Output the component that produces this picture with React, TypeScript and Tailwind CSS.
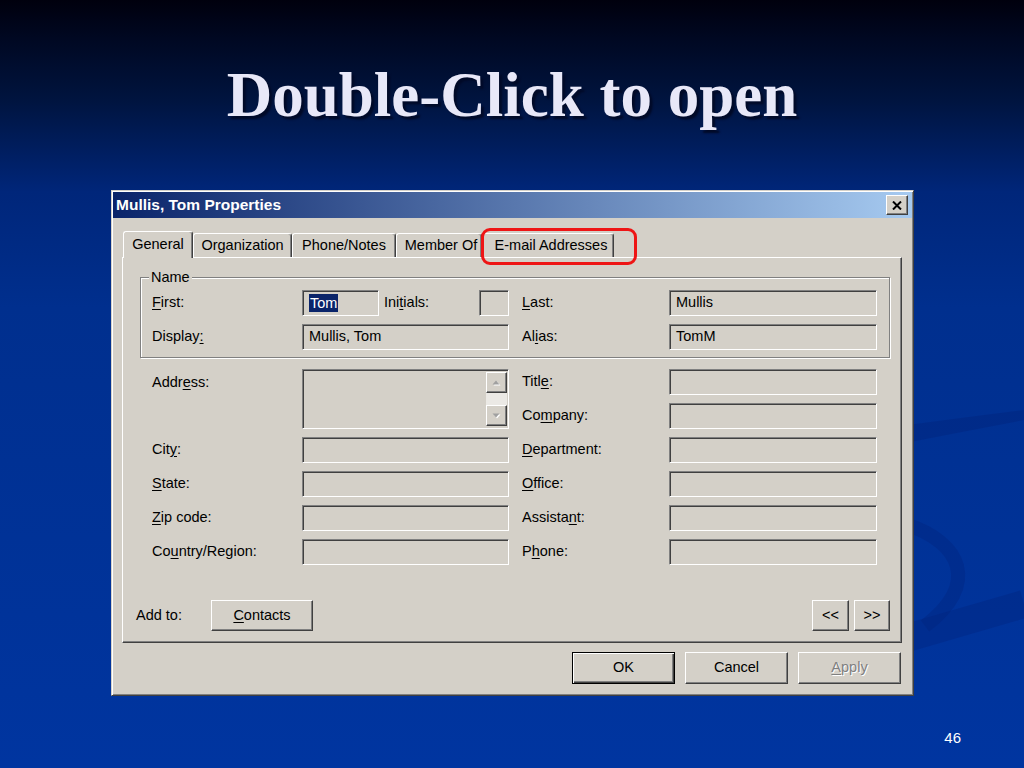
import React from "react";

const sunken =
  "bg-[#d4d0c8] border border-t-[#808080] border-l-[#808080] border-b-white border-r-white shadow-[inset_1px_1px_0_#404040,inset_-1px_-1px_0_#d4d0c8]";
const raised =
  "bg-[#d4d0c8] border border-t-white border-l-white border-r-[#404040] border-b-[#404040] shadow-[inset_-1px_-1px_0_#808080]";

// label with one underlined access key
function L({ t, k }: { t: string; k: number }) {
  return (
    <span className="whitespace-nowrap">
      {t.slice(0, k)}
      <span className="underline underline-offset-2">{t[k]}</span>
      {t.slice(k + 1)}
    </span>
  );
}

function Field({ value, className = "" }: { value?: React.ReactNode; className?: string }) {
  return (
    <div className={`${sunken} h-full flex items-center pl-[6px] ${className}`}>
      {value}
    </div>
  );
}

function Arrow({ up }: { up?: boolean }) {
  return (
    <div className={`${raised} h-[21px] flex items-center justify-center`}>
      <svg width="9" height="6" viewBox="0 0 9 6">
        <polygon points={up ? "1.5,5.5 8.5,5.5 5,1.5" : "1.5,1.5 8.5,1.5 5,5.5"} fill="#fff" />
        <polygon points={up ? "0.5,4.5 7.5,4.5 4,0.5" : "0.5,0.5 7.5,0.5 4,4.5"} fill="#a0a0a0" />
      </svg>
    </div>
  );
}

const tabs = [
  { label: "General", w: "w-[70px]", active: true },
  { label: "Organization", w: "w-[99px]" },
  { label: "Phone/Notes", w: "w-[104px]" },
  { label: "Member Of", w: "w-[86px]", pad: "pl-[4px]" },
  { label: "E-mail Addresses", w: "w-[132px]", pad: "pl-[6px]" },
];

export default function App() {
  return (
    <div className="relative w-[1024px] h-[768px] overflow-hidden bg-[linear-gradient(180deg,#00000d_0%,#000822_5%,#00143f_13%,#00267a_25%,#002f8e_40%,#0035a0_100%)]">
      {/* faint swoosh of the slide template */}
      <svg className="absolute inset-0" width="1024" height="768" viewBox="0 0 1024 768">
        <path d="M 900 426 Q 960 418 1024 410 L 1024 420 Q 960 432 900 444 Z" fill="#00227a" opacity="0.4" />
        <path d="M 905 524 C 962 542 980 585 925 626" stroke="#00227a" strokeWidth="14" fill="none" opacity="0.35" />
        <path d="M 900 640 L 1024 604" stroke="#00227a" strokeWidth="28" fill="none" opacity="0.35" />
      </svg>

      <div className="relative flex flex-col">
        <h1 className="h-[190px] pt-[64px] text-center text-[63px] leading-[63px] font-bold font-['Liberation_Serif','Times_New_Roman',serif] text-[#e8e8f8] [text-shadow:3px_3px_2px_#000a28]">
          Double-Click to open
        </h1>

        {/* dialog */}
        <div className="ml-[111px] w-[803px] h-[506px] p-[1px] flex flex-col bg-[#d4d0c8] border border-t-[#d4d0c8] border-l-[#d4d0c8] border-r-[#404040] border-b-[#404040] shadow-[inset_1px_1px_0_#fff,inset_-1px_-1px_0_#808080] font-['Liberation_Sans',Arial,sans-serif] text-[14.5px] text-black">
          <div className="h-[26px] flex items-center pl-[3px] pr-[4px] bg-[linear-gradient(90deg,#0a246a,#a6caf0)]">
            <span className="flex-1 text-white font-bold text-[15.5px]">Mullis, Tom Properties</span>
            <div className={`${raised} w-[22px] h-[20px] flex items-center justify-center`}>
              <svg width="10" height="9" viewBox="0 0 10 9">
                <path d="M1 0.5 L9 8.5 M9 0.5 L1 8.5" stroke="#000" strokeWidth="2" />
              </svg>
            </div>
          </div>

          <div className="relative flex-1 flex flex-col pl-[9px] pr-[10px] pt-[13px]">
            {/* tabs */}
            <div className="flex items-end h-[26px]">
              {tabs.map((t) =>
                t.active ? (
                  <div
                    key={t.label}
                    className={`${t.w} relative z-10 ml-[1px] -mb-[1px] h-[27px] flex items-start pt-[2px] justify-center bg-[#d4d0c8] border-t border-l border-r border-t-white border-l-white border-r-[#404040] shadow-[inset_-1px_0_0_#808080] rounded-t-[3px]`}
                  >
                    {t.label}
                  </div>
                ) : (
                  <div
                    key={t.label}
                    className={`${t.w} ${t.pad ?? ""} h-[24px] flex items-center justify-center border-t border-l border-r border-t-white border-l-white border-r-[#404040] shadow-[inset_-1px_0_0_#808080] rounded-t-[3px]`}
                  >
                    {t.label}
                  </div>
                )
              )}
            </div>

            {/* red highlight */}
            <div className="absolute left-[368px] top-[10px] w-[156px] h-[37px] rounded-[9px] border-[3px] border-[#ee1515]" />

            {/* tab panel */}
            <div className="w-[780px] h-[386px] flex flex-col border border-t-white border-l-white border-r-[#404040] border-b-[#404040] shadow-[inset_-1px_-1px_0_#808080]">
              {/* Name group */}
              <div className="relative ml-[17px] mr-[11px] mt-[19px] h-[81px] border border-[#808080] shadow-[inset_1px_1px_0_#fff,1px_1px_0_#fff]">
                <span className="absolute left-[8px] -top-[10px] px-[2px] leading-[18px] bg-[#d4d0c8]">Name</span>
                <div className="pl-[11px] pt-[12px] flex flex-col gap-[8px]">
                  <div className="flex items-center h-[26px]">
                    <span className="w-[150px]"><L t="First:" k={0} /></span>
                    <Field
                      className="w-[77px]"
                      value={<span className="bg-[#0a246a] text-white px-[1px] leading-[18px]">Tom</span>}
                    />
                    <span className="ml-[5px] w-[95px]"><L t="Initials:" k={3} /></span>
                    <Field className="w-[30px]" />
                    <span className="ml-[13px] w-[147px]"><L t="Last:" k={0} /></span>
                    <Field className="w-[208px]" value="Mullis" />
                  </div>
                  <div className="flex items-center h-[26px]">
                    <span className="w-[150px]"><L t="Display:" k={7} /></span>
                    <Field className="w-[207px]" value="Mullis, Tom" />
                    <span className="ml-[13px] w-[147px]"><L t="Alias:" k={2} /></span>
                    <Field className="w-[208px]" value="TomM" />
                  </div>
                </div>
              </div>

              {/* address grid */}
              <div className="ml-[29px] mt-[11px] grid grid-cols-[150px_207px_13px_147px_208px] grid-rows-[repeat(6,26px)] gap-y-[8px] items-center">
                <span className="row-start-1 col-start-1 self-start pt-[3px]"><L t="Address:" k={4} /></span>
                <div className={`${sunken} row-start-1 row-span-2 col-start-2 h-full flex justify-end p-[2px] pr-[1px]`}>
                  <div className="w-[21px] flex flex-col">
                    <Arrow up />
                    <div className="flex-1 bg-[#ebe9e5]" />
                    <Arrow />
                  </div>
                </div>

                <span className="row-start-3 col-start-1"><L t="City:" k={3} /></span>
                <div className="row-start-3 col-start-2 h-full"><Field /></div>
                <span className="row-start-4 col-start-1"><L t="State:" k={0} /></span>
                <div className="row-start-4 col-start-2 h-full"><Field /></div>
                <span className="row-start-5 col-start-1"><L t="Zip code:" k={0} /></span>
                <div className="row-start-5 col-start-2 h-full"><Field /></div>
                <span className="row-start-6 col-start-1"><L t="Country/Region:" k={2} /></span>
                <div className="row-start-6 col-start-2 h-full"><Field /></div>

                <span className="row-start-1 col-start-4"><L t="Title:" k={4} /></span>
                <div className="row-start-1 col-start-5 h-full"><Field /></div>
                <span className="row-start-2 col-start-4"><L t="Company:" k={2} /></span>
                <div className="row-start-2 col-start-5 h-full"><Field /></div>
                <span className="row-start-3 col-start-4"><L t="Department:" k={0} /></span>
                <div className="row-start-3 col-start-5 h-full"><Field /></div>
                <span className="row-start-4 col-start-4"><L t="Office:" k={0} /></span>
                <div className="row-start-4 col-start-5 h-full"><Field /></div>
                <span className="row-start-5 col-start-4"><L t="Assistant:" k={7} /></span>
                <div className="row-start-5 col-start-5 h-full"><Field /></div>
                <span className="row-start-6 col-start-4"><L t="Phone:" k={1} /></span>
                <div className="row-start-6 col-start-5 h-full"><Field /></div>
              </div>

              {/* add to row */}
              <div className="mt-[35px] h-[31px] flex items-center pl-[13px] pr-[11px]">
                <span className="w-[75px]">Add to:</span>
                <div className={`${raised} w-[102px] h-full flex items-center justify-center`}>
                  <L t="Contacts" k={0} />
                </div>
                <div className="flex-1" />
                <div className={`${raised} w-[37px] h-full flex items-center justify-center`}>&lt;&lt;</div>
                <div className={`${raised} ml-[5px] w-[36px] h-full flex items-center justify-center`}>&gt;&gt;</div>
              </div>
            </div>

            {/* dialog buttons */}
            <div className="mt-[9px] flex justify-end gap-[10px] pr-[1px]">
              <div className="w-[103px] h-[32px] flex items-center justify-center bg-[#d4d0c8] border border-black shadow-[inset_1px_1px_0_#fff,inset_-1px_-1px_0_#404040,inset_-2px_-2px_0_#808080]">
                OK
              </div>
              <div className={`${raised} w-[103px] h-[32px] flex items-center justify-center`}>Cancel</div>
              <div className={`${raised} w-[103px] h-[32px] flex items-center justify-center text-[#808080] [text-shadow:1px_1px_0_#fff]`}>
                <L t="Apply" k={0} />
              </div>
            </div>
          </div>
        </div>

        <div className="mt-[33px] pr-[63px] flex justify-end">
          <span className="text-white text-[15px] leading-[18px] font-['Liberation_Sans',Arial,sans-serif]">46</span>
        </div>
      </div>
    </div>
  );
}
